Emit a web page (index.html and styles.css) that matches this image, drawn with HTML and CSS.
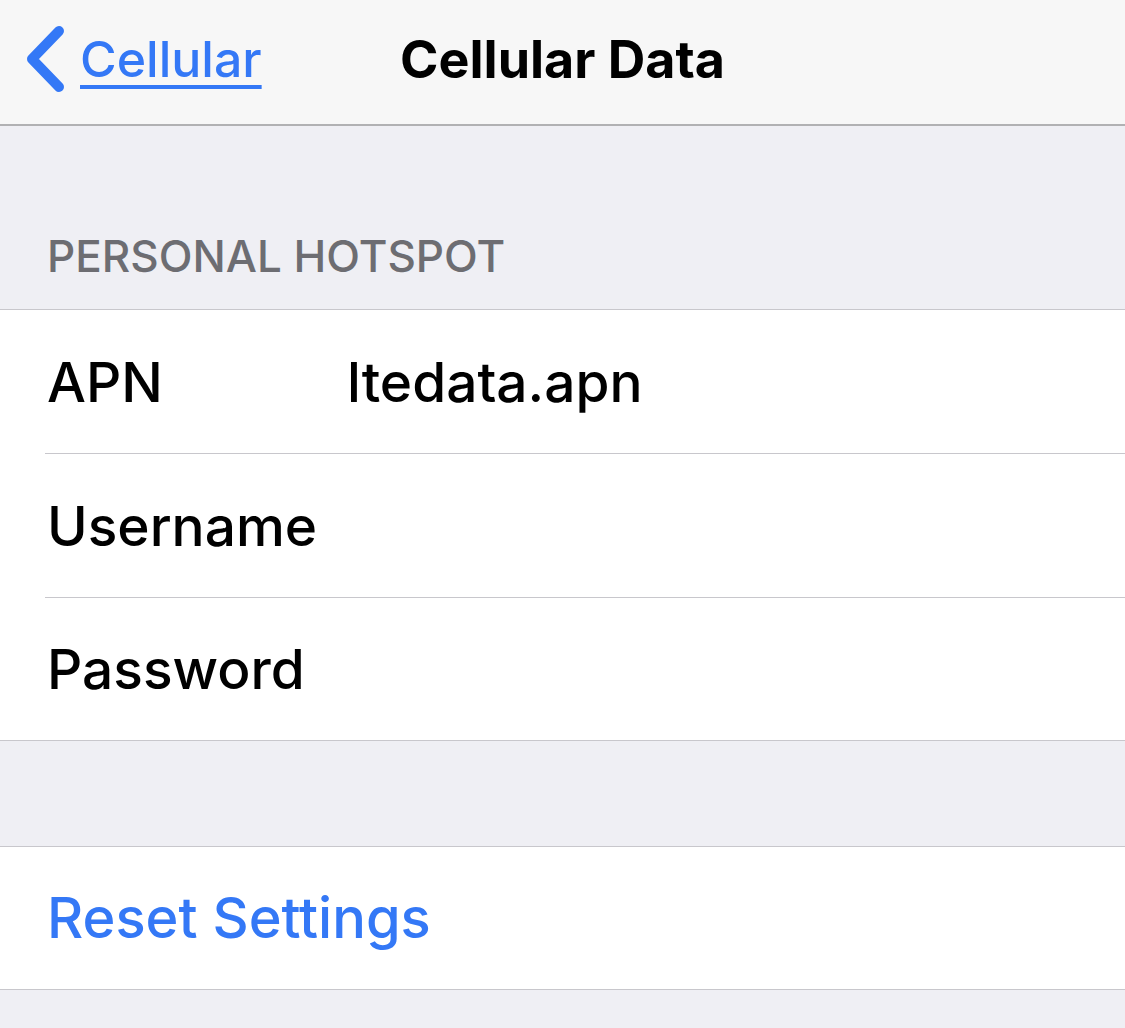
FILE: index.html
```html
<!DOCTYPE html>
<html lang="en">
  <head>
    <title>Cellular Data</title>
    <meta charset="UTF-8" />
    <meta name="viewport" content="width=device-width, initial-scale=1.0" />
    <link rel="stylesheet" href="styles.css">
  </head>

  <body>
    <div class="nav-bar">
      <a class="back-link" href="#">
        <svg class="chevron" width="40" height="68" viewBox="0 0 40 68">
          <polyline points="33,6 6,34 33,62" fill="none" stroke="#3478f6" stroke-width="10" stroke-linecap="round" stroke-linejoin="round" />
        </svg>
        <span class="back-text">Cellular</span>
      </a>
      <h1 class="nav-title">Cellular Data</h1>
      <div></div>
    </div>

    <div class="section-label">PERSONAL HOTSPOT</div>
    <div class="group">
      <div class="row">
        <span class="row-label">APN</span>
        <span class="row-value">ltedata.apn</span>
      </div>
      <div class="row">
        <span class="row-label">Username</span>
        <span class="row-value"></span>
      </div>
      <div class="row">
        <span class="row-label">Password</span>
        <span class="row-value"></span>
      </div>
    </div>

    <div class="spacer"></div>
    <div class="group">
      <div class="row">
        <span class="row-action">Reset Settings</span>
      </div>
    </div>
  </body>
</html>
```

FILE: styles.css
```css
body {
  font-family: Inter, "Noto Sans", sans-serif;
  background-color: #efeff4;
  margin: 0;
  color: #000;
}

.nav-bar {
  display: grid;
  grid-template-columns: 1fr auto 1fr;
  align-items: center;
  height: 126px;
  box-sizing: border-box;
  padding-bottom: 6px;
  background-color: #f7f7f7;
  border-bottom: 2px solid #b1b1b3;
}

.back-link {
  display: flex;
  align-items: center;
  gap: 14px;
  padding-left: 26px;
  color: #3478f6;
  text-decoration: none;
}

.back-text {
  font-size: 50px;
  font-weight: 500;
  text-decoration: underline;
  text-decoration-thickness: 4px;
  text-underline-offset: 8px;
}

.nav-title {
  margin: 0;
  font-size: 52px;
  font-weight: 700;
}

.section-label {
  height: 183px;
  box-sizing: border-box;
  padding: 0 0 26px 47px;
  display: flex;
  align-items: flex-end;
  font-size: 44px;
  font-weight: 500;
  color: #6d6d72;
}

.group {
  background-color: #fff;
  border-top: 1px solid #c8c7cc;
  border-bottom: 1px solid #c8c7cc;
}

.row {
  display: flex;
  align-items: center;
  height: 143px;
  margin-left: 45px;
  border-bottom: 1px solid #c8c7cc;
  font-size: 55px;
  font-weight: 500;
}

.row:last-child {
  border-bottom: none;
  height: 142px;
}

.row-label {
  width: 300px;
  padding-left: 2px;
}

.row-action {
  padding-left: 2px;
  font-size: 56px;
  color: #3478f6;
}

.spacer {
  height: 105px;
}
```
